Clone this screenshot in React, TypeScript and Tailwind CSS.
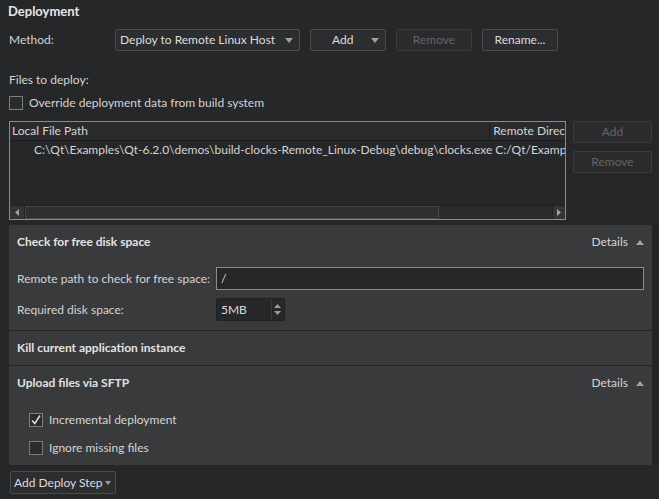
import React from "react";

const Arrow = ({ up = false, color = "#9a9a9a", w = 8, h = 5 }: { up?: boolean; color?: string; w?: number; h?: number }) => (
  <svg width={w} height={h} viewBox={`0 0 ${w} ${h}`} className="shrink-0">
    {up ? (
      <polygon points={`0,${h} ${w},${h} ${w / 2},0`} fill={color} />
    ) : (
      <polygon points={`0,0 ${w},0 ${w / 2},${h}`} fill={color} />
    )}
  </svg>
);

const Btn = ({ children, disabled = false, w = "w-[76px]" }: { children: React.ReactNode; disabled?: boolean; w?: string }) => (
  <div
    className={`${w} h-[22px] rounded-[2px] border flex items-center justify-center ${
      disabled ? "border-[#3a3b3d] bg-[#2a2b2d] text-[#646567]" : "border-[#4a4b4d] bg-[#2c2d2f] text-[#dcdcdc]"
    }`}
  >
    {children}
  </div>
);

const Check = ({ checked = false }: { checked?: boolean }) => (
  <div className="w-[14px] h-[14px] border border-[#7d7e80] bg-[#2a2b2d] flex items-center justify-center shrink-0">
    {checked && (
      <svg width="12" height="12" viewBox="0 0 12 12">
        <path d="M2 6.5 L4.8 9.5 L10 1.5" stroke="#e0e0e0" strokeWidth="1.5" fill="none" />
      </svg>
    )}
  </div>
);

const Details = () => (
  <div className="flex items-center gap-[8px] text-[#d4d4d4] font-normal">
    <span>Details</span>
    <Arrow up color="#a0a0a0" />
  </div>
);

export default function App() {
  return (
    <div className="w-[659px] h-[499px] bg-[#262729] text-[#d4d4d4] text-[12px] overflow-hidden font-['Lato',sans-serif] leading-none">
      <div className="h-[22px] pl-[8px] flex items-center font-bold text-[13px] text-[#e6e6e6]">Deployment</div>

      <div className="mt-[7px] h-[22px] flex items-center">
        <div className="w-[115px] pl-[9px]">Method:</div>
        <div className="w-[185px] h-[22px] rounded-[2px] border border-[#4a4b4d] bg-[#2c2d2f] flex items-center justify-between pl-[4px] pr-[6px] text-[#dcdcdc]">
          <span>Deploy to Remote Linux Host</span>
          <Arrow color="#a0a0a0" />
        </div>
        <div className="ml-[10px] w-[76px] h-[22px] rounded-[2px] border border-[#4a4b4d] bg-[#2c2d2f] flex items-center pl-[21px] pr-[6px] justify-between text-[#dcdcdc]">
          <span>Add</span>
          <Arrow color="#a0a0a0" />
        </div>
        <div className="ml-[10px]">
          <Btn disabled>Remove</Btn>
        </div>
        <div className="ml-[10px]">
          <Btn>Rename...</Btn>
        </div>
      </div>

      <div className="mt-[22px] h-[14px] pl-[9px] flex items-center">Files to deploy:</div>

      <div className="mt-[9px] h-[14px] pl-[9px] flex items-center gap-[6px]">
        <Check />
        <span>Override deployment data from build system</span>
      </div>

      <div className="mt-[11px] flex ml-[9px]">
        <div className="w-[557px] h-[99px] border border-[#8a8b8d] bg-[#262729] flex flex-col overflow-hidden">
          <div className="h-[19px] flex border-b border-[#1c1d1e] bg-[#2a2b2d]">
            <div className="w-[483px] pl-[2px] flex items-center border-r border-[#1c1d1e]">Local File Path</div>
            <div className="pl-[3px] flex items-center whitespace-nowrap">Remote Direc</div>
          </div>
          <div className="h-[18px] flex items-center whitespace-nowrap">
            <div className="w-[484px] pl-[24px]">C:\Qt\Examples\Qt-6.2.0\demos\build-clocks-Remote_Linux-Debug\debug\clocks.exe</div>
            <div className="pl-[3px]">C:/Qt/Examp</div>
          </div>
          <div className="flex-1" />
          <div className="h-[14px] flex bg-[#2a2b2d] border-t border-[#1f2021]">
            <div className="w-[15px] flex items-center justify-center bg-[#333436] border-r border-[#1f2021]">
              <svg width="4" height="7" viewBox="0 0 4 7"><polygon points="4,0 4,7 0,3.5" fill="#a0a0a0" /></svg>
            </div>
            <div className="w-[414px] bg-[#2e2f31] border border-[#464749]" />
            <div className="flex-1" />
            <div className="w-[13px] flex items-center justify-center bg-[#333436] border-l border-[#1f2021]">
              <svg width="4" height="7" viewBox="0 0 4 7"><polygon points="0,0 0,7 4,3.5" fill="#a0a0a0" /></svg>
            </div>
          </div>
        </div>
        <div className="ml-[7px] flex flex-col gap-[8px]">
          <Btn disabled w="w-[79px]">Add</Btn>
          <Btn disabled w="w-[79px]">Remove</Btn>
        </div>
      </div>

      <div className="mt-[5px] flex">
        <div className="ml-[9px] w-[643px] flex flex-col">
          <div className="bg-[#393a3c] h-[105px] pl-[8px] pr-[8px] flex flex-col">
            <div className="h-[34px] flex items-center justify-between">
              <span className="text-[#e2e2e2] font-bold">Check for free disk space</span>
              <Details />
            </div>
            <div className="mt-[8px] h-[23px] flex items-center">
              <div className="w-[199px]">Remote path to check for free space:</div>
              <div className="flex-1 h-[23px] border border-[#8a8b8d] bg-[#262729] flex items-center pl-[4px] text-[#dcdcdc]">/</div>
            </div>
            <div className="mt-[8px] h-[23px] flex items-center">
              <div className="w-[199px]">Required disk space:</div>
              <div className="w-[69px] h-[23px] rounded-[2px] border border-[#1f2021] bg-[#262729] flex items-center justify-between pl-[4px] pr-[3px] text-[#dcdcdc]">
                <span>5MB</span>
                <div className="flex flex-col gap-[3px] border-l border-[#3a3b3d] pl-[2px] h-full justify-center">
                  <svg width="7" height="4" viewBox="0 0 7 4"><polygon points="0,4 7,4 3.5,0" fill="#9a9a9a" /></svg>
                  <svg width="7" height="4" viewBox="0 0 7 4"><polygon points="0,0 7,0 3.5,4" fill="#9a9a9a" /></svg>
                </div>
              </div>
            </div>
          </div>
          <div className="h-[1px] bg-[#242527]" />
          <div className="bg-[#393a3c] h-[34px] pl-[8px] flex items-center font-bold text-[#e2e2e2]">Kill current application instance</div>
          <div className="h-[1px] bg-[#242527]" />
          <div className="bg-[#393a3c] h-[99px] pl-[8px] pr-[8px] flex flex-col">
            <div className="h-[34px] flex items-center justify-between">
              <span className="text-[#e2e2e2] font-bold">Upload files via SFTP</span>
              <Details />
            </div>
            <div className="mt-[13px] h-[14px] pl-[12px] flex items-center gap-[6px]">
              <Check checked />
              <span>Incremental deployment</span>
            </div>
            <div className="mt-[14px] h-[14px] pl-[12px] flex items-center gap-[6px]">
              <Check />
              <span>Ignore missing files</span>
            </div>
          </div>
        </div>
        <div className="flex-1 bg-[#232426]" />
      </div>

      <div className="mt-[6px] ml-[10px] w-[106px] h-[23px] rounded-[2px] border border-[#4a4b4d] bg-[#2c2d2f] flex items-center pl-[3px] gap-[2px] text-[#dcdcdc]">
        <span>Add Deploy Step</span>
        <Arrow color="#a0a0a0" w={6} h={4} />
      </div>
    </div>
  );
}
